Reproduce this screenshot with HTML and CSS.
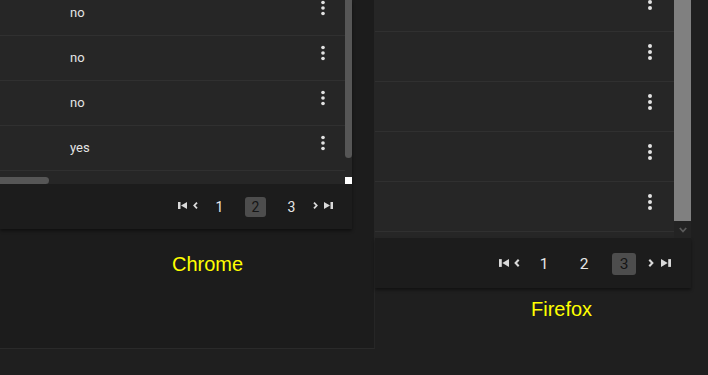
FILE: index.html
```html
<!DOCTYPE html>
<html>
<head>
<meta charset="utf-8">
<link rel="stylesheet" href="styles.css">
</head>
<body>
<div class="stage">
  <section class="chrome-panel">
    <div class="card">
      <div class="table-grid">
        <div class="viewport">
          <div class="rows">
            <div class="row"><span class="cell">no</span><svg class="kebab" viewBox="0 0 24 24"><circle cx="12" cy="6" r="2"/><circle cx="12" cy="12" r="2"/><circle cx="12" cy="18" r="2"/></svg></div>
            <div class="row"><span class="cell">no</span><svg class="kebab" viewBox="0 0 24 24"><circle cx="12" cy="6" r="2"/><circle cx="12" cy="12" r="2"/><circle cx="12" cy="18" r="2"/></svg></div>
            <div class="row"><span class="cell">no</span><svg class="kebab" viewBox="0 0 24 24"><circle cx="12" cy="6" r="2"/><circle cx="12" cy="12" r="2"/><circle cx="12" cy="18" r="2"/></svg></div>
            <div class="row"><span class="cell">yes</span><svg class="kebab" viewBox="0 0 24 24"><circle cx="12" cy="6" r="2"/><circle cx="12" cy="12" r="2"/><circle cx="12" cy="18" r="2"/></svg></div>
            <div class="row"></div>
          </div>
        </div>
        <div class="vscroll"><div class="vthumb"></div></div>
        <div class="hscroll"><div class="hthumb"></div></div>
        <div class="corner"></div>
      </div>
      <div class="pager">
        <svg class="pi pi-first" viewBox="0 0 9 7"><rect x="0" y="0" width="2.5" height="7"/><polygon points="9,0 9,7 3,3.5"/></svg>
        <svg class="pi pi-prev" viewBox="0 0 5 7"><polyline points="4,0.6 1.3,3.5 4,6.4"/></svg>
        <span class="pb">1</span>
        <span class="pb pb-active">2</span>
        <span class="pb">3</span>
        <svg class="pi pi-next" viewBox="0 0 5 7"><polyline points="1,0.6 3.7,3.5 1,6.4"/></svg>
        <svg class="pi pi-last" viewBox="0 0 9 7"><polygon points="0,0 0,7 6,3.5"/><rect x="6.5" y="0" width="2.5" height="7"/></svg>
      </div>
    </div>
    <div class="label chrome-label">Chrome</div>
  </section>

  <section class="ff-panel">
    <div class="ff-table">
      <div class="ff-viewport">
        <div class="ff-rows">
          <div class="ff-row"><svg class="ff-kebab" viewBox="0 0 24 24"><circle cx="12" cy="6" r="2"/><circle cx="12" cy="12" r="2"/><circle cx="12" cy="18" r="2"/></svg></div>
          <div class="ff-row"><svg class="ff-kebab" viewBox="0 0 24 24"><circle cx="12" cy="6" r="2"/><circle cx="12" cy="12" r="2"/><circle cx="12" cy="18" r="2"/></svg></div>
          <div class="ff-row"><svg class="ff-kebab" viewBox="0 0 24 24"><circle cx="12" cy="6" r="2"/><circle cx="12" cy="12" r="2"/><circle cx="12" cy="18" r="2"/></svg></div>
          <div class="ff-row"><svg class="ff-kebab" viewBox="0 0 24 24"><circle cx="12" cy="6" r="2"/><circle cx="12" cy="12" r="2"/><circle cx="12" cy="18" r="2"/></svg></div>
          <div class="ff-row"><svg class="ff-kebab" viewBox="0 0 24 24"><circle cx="12" cy="6" r="2"/><circle cx="12" cy="12" r="2"/><circle cx="12" cy="18" r="2"/></svg></div>
          <div class="ff-row"></div>
        </div>
      </div>
      <div class="ff-scroll">
        <div class="ff-thumb"></div>
        <div class="ff-btn"><svg class="ff-chev" viewBox="0 0 8 6"><polyline points="0.8,1 4,4.5 7.2,1"/></svg></div>
      </div>
    </div>
    <div class="pager ff-pager">
      <svg class="pi pi-first" viewBox="0 0 9 7"><rect x="0" y="0" width="2.5" height="7"/><polygon points="9,0 9,7 3,3.5"/></svg>
      <svg class="pi pi-prev" viewBox="0 0 5 7"><polyline points="4,0.6 1.3,3.5 4,6.4"/></svg>
      <span class="pb">1</span>
      <span class="pb">2</span>
      <span class="pb pb-active">3</span>
      <svg class="pi pi-next" viewBox="0 0 5 7"><polyline points="1,0.6 3.7,3.5 1,6.4"/></svg>
      <svg class="pi pi-last" viewBox="0 0 9 7"><polygon points="0,0 0,7 6,3.5"/><rect x="6.5" y="0" width="2.5" height="7"/></svg>
    </div>
    <div class="label ff-label">Firefox</div>
  </section>
</div>
</body>
</html>
```

FILE: styles.css
```css
* { box-sizing: border-box; }

html, body {
  margin: 0;
  padding: 0;
  background: #1f1f1f;
  width: 708px;
  height: 375px;
  overflow: hidden;
  font-family: Roboto, "Liberation Sans", Arial, sans-serif;
}

.stage {
  display: flex;
  align-items: flex-start;
}

/* ---------- Chrome panel ---------- */
.chrome-panel {
  flex: 0 0 375px;
  width: 375px;
  height: 349px;
  background: #1c1c1c;
  border-right: 1px solid #262626;
  border-bottom: 1px solid #2a2a2a;
}

.card {
  width: 352px;
  box-shadow: 0 2px 3px rgba(0, 0, 0, 0.45);
}

.table-grid {
  display: grid;
  grid-template-columns: 345px 7px;
  grid-template-rows: 177px 7px;
  background: #262626;
}

.viewport {
  overflow: hidden;
}

.rows {
  margin-top: -9px;
}

.row {
  height: 45px;
  border-bottom: 1px solid #303030;
  display: flex;
  align-items: center;
  padding: 0 11px 2px 70px;
  color: #e4e4e4;
  font-size: 13px;
}

.kebab {
  margin-left: auto;
  align-self: flex-start;
  margin-top: 5.5px;
  width: 22px;
  height: 22px;
  fill: #e2e2e2;
}

.vscroll {
  background: #262626;
}

.vthumb {
  height: 158px;
  background: #565656;
  border-radius: 0 0 3.5px 3.5px;
}

.hscroll {
  background: #262626;
}

.hthumb {
  width: 49px;
  height: 7px;
  background: #565656;
  border-radius: 0 3.5px 3.5px 0;
}

.corner {
  background: #ffffff;
}

/* ---------- Pager ---------- */
.pager {
  height: 45px;
  background: #1c1c1c;
  display: flex;
  align-items: flex-start;
  justify-content: flex-end;
  padding-right: 19px;
  color: #e6e6e6;
}

.pi {
  display: block;
  flex: none;
  margin-top: 18px;
  fill: #d9d9d9;
  stroke: #d9d9d9;
}

.pi-first, .pi-last {
  width: 9px;
  height: 7px;
  stroke: none;
}

.pi-prev, .pi-next {
  width: 5px;
  height: 7px;
  fill: none;
  stroke-width: 1.8;
}

.pi-prev { margin-left: 6px; }
.pi-last { margin-left: 6px; }
.pi-next { margin-left: 11px; }

.pb {
  flex: none;
  width: 21px;
  height: 20px;
  margin-top: 13px;
  margin-left: 15px;
  border-radius: 3px;
  text-align: center;
  font-size: 14px;
  line-height: 20px;
}

.pi-prev + .pb { margin-left: 11px; }

.pb-active {
  background: #4d4d4d;
  color: #151515;
}

.label {
  font-family: "Liberation Sans", Arial, sans-serif;
  font-size: 20px;
  color: #ffff00;
  line-height: 23px;
}

.chrome-label {
  margin-top: 24px;
  padding-left: 172px;
}

/* ---------- Firefox panel ---------- */
.ff-panel {
  flex: 0 0 316px;
  width: 316px;
}

.ff-table {
  display: flex;
  height: 238px;
  background: #262626;
}

.ff-viewport {
  flex: 1;
  overflow: hidden;
}

.ff-rows {
  margin-top: -18px;
}

.ff-row {
  height: 50px;
  border-bottom: 1px solid #303030;
  display: flex;
  justify-content: flex-end;
  align-items: flex-start;
  padding-right: 12px;
}

.ff-kebab {
  width: 24px;
  height: 24px;
  margin-top: 8px;
  fill: #e2e2e2;
}

.ff-scroll {
  flex: 0 0 17px;
  display: flex;
  flex-direction: column;
}

.ff-thumb {
  height: 221px;
  background: #808080;
}

.ff-btn {
  height: 17px;
  background: #232323;
  display: flex;
  align-items: center;
  justify-content: center;
}

.ff-chev {
  width: 8px;
  height: 6px;
  fill: none;
  stroke: #5a5a5a;
  stroke-width: 1.8;
}

.ff-pager {
  height: 50px;
  padding-right: 20px;
  box-shadow: 0 2px 3px rgba(0, 0, 0, 0.45);
}

.ff-pager .pi { margin-top: 21px; }
.ff-pager .pi-first, .ff-pager .pi-last { width: 10px; height: 8px; }
.ff-pager .pi-prev, .ff-pager .pi-next { width: 6px; height: 8px; }
.ff-pager .pi-prev { margin-left: 5px; }
.ff-pager .pi-next { margin-left: 12px; }
.ff-pager .pi-last { margin-left: 7px; }

.ff-pager .pb {
  width: 24px;
  height: 22px;
  margin-top: 15px;
  margin-left: 16px;
  font-size: 15.5px;
  line-height: 22px;
}

.ff-pager .pi-prev + .pb { margin-left: 12px; }

.ff-label {
  margin-top: 10px;
  padding-left: 156px;
}
```
